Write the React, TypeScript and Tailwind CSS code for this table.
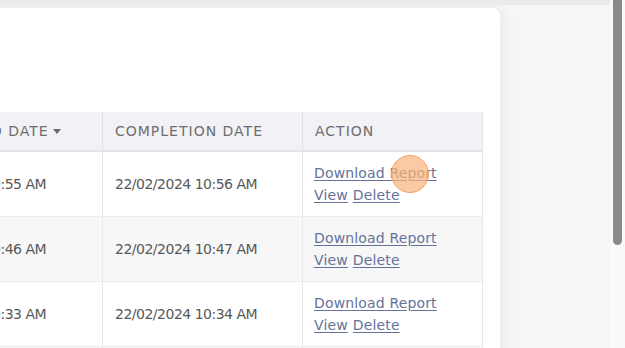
import { useState } from 'react'

type Report = {
  id: number
  requested: string
  completed: string
}

const reports: Report[] = [
  { id: 1, requested: '22/02/2024 10:55 AM', completed: '22/02/2024 10:56 AM' },
  { id: 2, requested: '22/02/2024 10:46 AM', completed: '22/02/2024 10:47 AM' },
  { id: 3, requested: '22/02/2024 10:33 AM', completed: '22/02/2024 10:34 AM' },
  { id: 4, requested: '22/02/2024 10:21 AM', completed: '22/02/2024 10:22 AM' },
]

const font = { fontFamily: '"DejaVu Sans", "Liberation Sans", sans-serif' }

function SortCaret() {
  return (
    <svg width="8" height="5" viewBox="0 0 8 5" className="ml-[4px] inline-block">
      <path d="M0 0h8L4 5z" fill="#6b6b6b" />
    </svg>
  )
}

function ReportRow({ report, shaded }: { report: Report; shaded: boolean }) {
  const [clicked, setClicked] = useState(report.id === 1)

  return (
    <div
      className={`grid h-[65px] grid-cols-[211px_200px_180px] border-b border-[#ececef] ${
        shaded ? 'bg-[#f7f7f7]' : 'bg-white'
      }`}
    >
      <div className="flex items-center border-r border-[#e8e8ec] pl-3 text-[14px] tracking-[-0.5px] text-[#585858]">
        {report.requested}
      </div>
      <div className="flex items-center border-r border-[#e8e8ec] pl-3 text-[14px] tracking-[-0.5px] text-[#585858]">
        {report.completed}
      </div>
      <div className="relative flex flex-col justify-center border-r border-[#e8e8ec] pl-[11px] text-[14px] leading-[22px] tracking-[0.15px] text-[#65739a]">
        <a href="#" className="w-fit underline underline-offset-2" onClick={() => setClicked(true)}>
          Download Report
        </a>
        <div className="flex gap-[5px]">
          <a href="#" className="underline underline-offset-2">View</a>
          <a href="#" className="underline underline-offset-2">Delete</a>
        </div>
        {clicked && (
          <span className="pointer-events-none absolute left-[88px] top-[3px] h-[38px] w-[38px] rounded-full border-[1.5px] border-[#f4a263] bg-[#fbb47a]/70" />
        )}
      </div>
    </div>
  )
}

export default function App() {
  return (
    <div className="flex h-[348px] w-[625px] overflow-hidden bg-[#f6f6f6]" style={font}>
      <div className="flex-1 overflow-hidden border-t-[5px] border-[#ebebeb] pt-[3px]">
        <div className="-ml-[125px] w-[625px] rounded-tr-lg bg-white pt-[104px] pl-[17px] pr-[17px] shadow-[4px_0_14px_rgba(0,0,0,0.06)]">
          <div className="w-[591px] border-r border-[#e4e4e8]">
            <div className="grid h-[40px] grid-cols-[211px_200px_180px] border-b-2 border-[#e3e3e8] bg-[#f1f1f6] text-[14px] uppercase tracking-[1px] text-[#6e6e6e]">
              <div className="flex items-center border-r border-[#e0e0e5] pl-4">
                Requested Date
                <SortCaret />
              </div>
              <div className="flex items-center border-r border-[#e0e0e5] pl-3">Completion Date</div>
              <div className="flex items-center pl-3">Action</div>
            </div>
            {reports.map((r, i) => (
              <ReportRow key={r.id} report={r} shaded={i % 2 === 1} />
            ))}
          </div>
        </div>
      </div>
      <div className="w-[15px] bg-[#fafafa] pl-[3px]">
        <div className="h-[245px] w-[9px] rounded-b-full bg-[#8a8a8a]" />
      </div>
    </div>
  )
}
